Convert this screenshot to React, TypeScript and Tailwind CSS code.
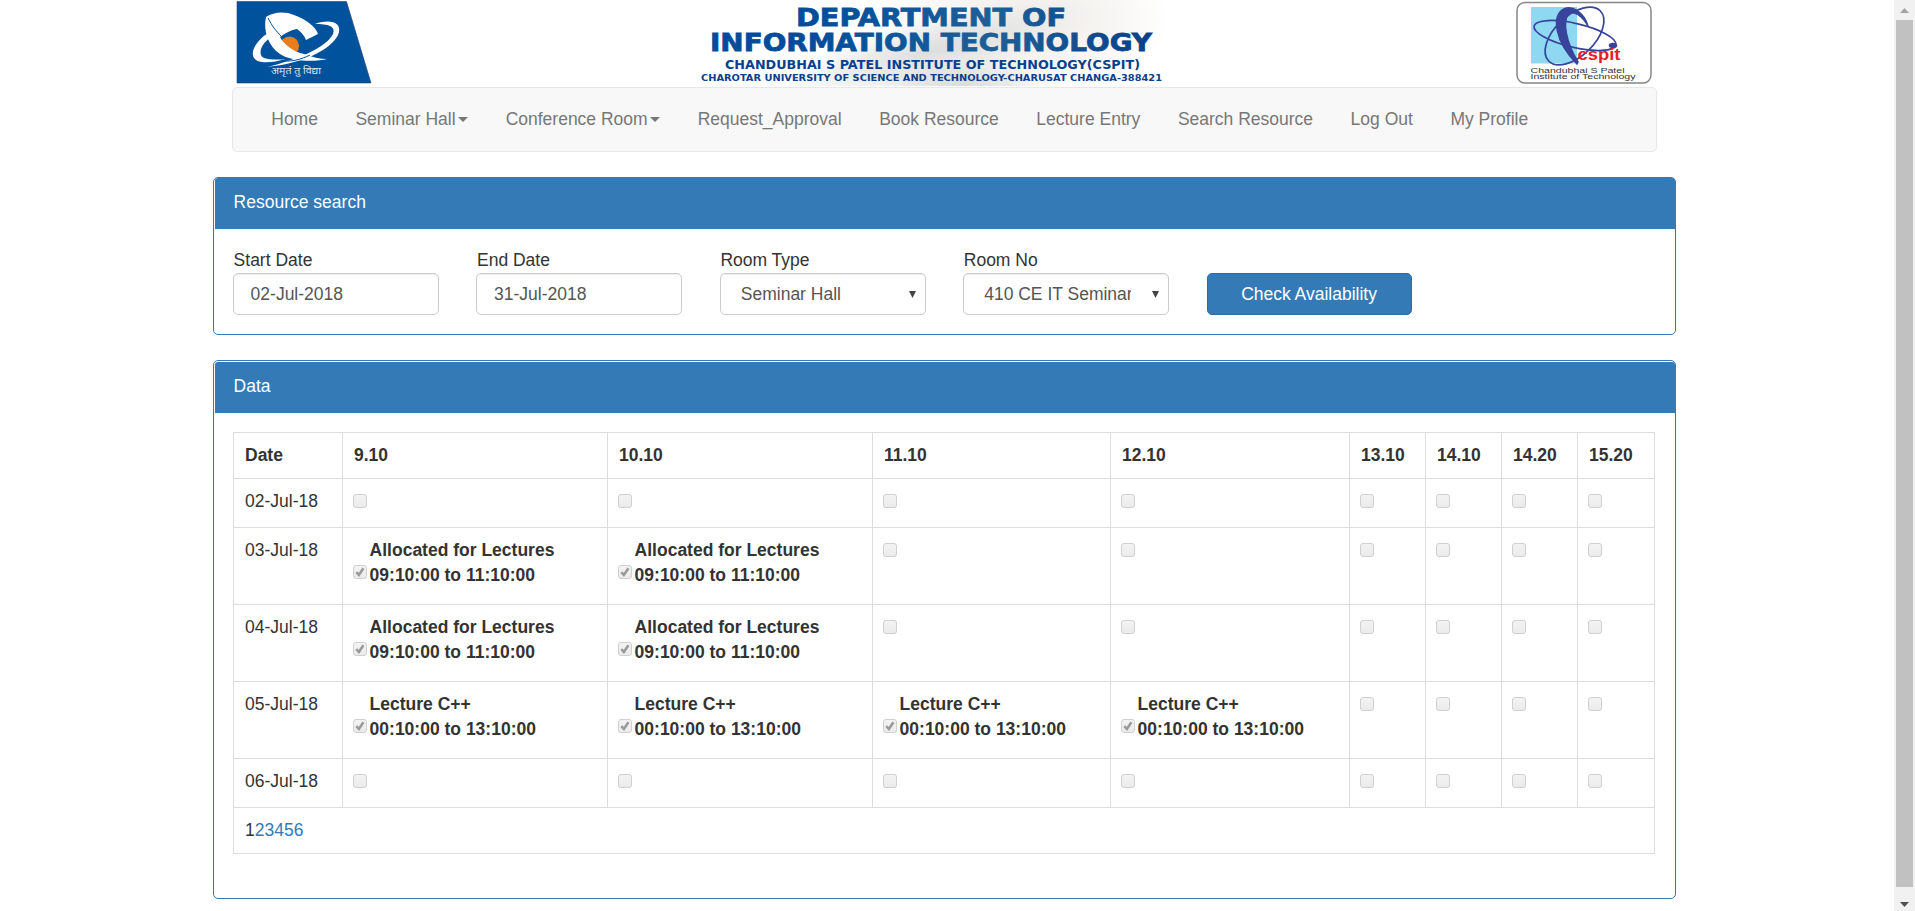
import React from "react";

const navItems = [
  { label: "Home" },
  { label: "Seminar Hall", caret: true },
  { label: "Conference Room", caret: true },
  { label: "Request_Approval" },
  { label: "Book Resource" },
  { label: "Lecture Entry" },
  { label: "Search Resource" },
  { label: "Log Out" },
  { label: "My Profile" },
];

const slots = ["9.10", "10.10", "11.10", "12.10", "13.10", "14.10", "14.20", "15.20"];

type Booking = { title: string; time: string; count: number };
const lectures: Booking = { title: "Allocated for Lectures", time: "09:10:00 to 11:10:00", count: 2 };
const cpp: Booking = { title: "Lecture C++", time: "00:10:00 to 13:10:00", count: 4 };

const rows: { date: string; booking?: Booking }[] = [
  { date: "02-Jul-18" },
  { date: "03-Jul-18", booking: lectures },
  { date: "04-Jul-18", booking: lectures },
  { date: "05-Jul-18", booking: cpp },
  { date: "06-Jul-18" },
];

function UniversityLogo() {
  return (
    <svg width="136" height="84" viewBox="0 0 136 84" className="block">
      <path d="M1 1.500H110.500L135 83H1Z" fill="#00529c" stroke="#27406f" strokeWidth="0.6" />
      <path
        d="M79 24C94 19 105 22 103 32C100 46 72 63 31 67C60 60 90 48 97 34C100 26 92 24 79 24Z"
        fill="#fff"
      />
      <path
        d="M32 33C20 41 14 52 18 58C22 64 36 63 50 59C38 60 27 60 25 55C23 49 28 42 34 38Z"
        fill="#fff"
      />
      <circle cx="53.500" cy="46" r="9.500" fill="#e87d1e" />
      <path
        d="M30 17C37 12 49 11 58 15C70 19 80 27 82 34L70 40C68 35 65 32 61 29C55 30 49 33 44 37C48 45 58 52 68 54C76 57 84 59 91 59C80 62 56 62 44 54C32 46 27 30 30 17Z"
        fill="#fff"
      />
      <path d="M32 18C36 26 40 31 45 36" fill="none" stroke="#00529c" strokeWidth="1" />
      <path d="M45 60C54 63 66 59 74 55" fill="none" stroke="#00529c" strokeWidth="1" />
      <text
        x="35"
        y="74"
        textLength="50"
        lengthAdjust="spacingAndGlyphs"
        fontSize="9"
        fill="#dbe6f2"
        fontFamily="Noto Sans, Noto Sans Devanagari, sans-serif"
      >
        अमृतं तु विद्या
      </text>
    </svg>
  );
}

function Banner() {
  const font = "DejaVu Sans, Liberation Sans, sans-serif";
  return (
    <svg width="480" height="86" viewBox="695 0 480 86" className="block">
      <defs>
        <radialGradient id="cream">
          <stop offset="0" stopColor="#f1eeea" />
          <stop offset="0.5" stopColor="#f6f4f1" />
          <stop offset="1" stopColor="#f6f4f1" stopOpacity="0" />
        </radialGradient>
        <radialGradient id="mist">
          <stop offset="0" stopColor="#cdd2d1" />
          <stop offset="0.5" stopColor="#dde0df" stopOpacity="0.8" />
          <stop offset="1" stopColor="#e5e7e6" stopOpacity="0" />
        </radialGradient>
        <linearGradient id="ink" x1="797" x2="1152" gradientUnits="userSpaceOnUse">
          <stop offset="0" stopColor="#004b9b" />
          <stop offset="0.55" stopColor="#1d5f98" />
          <stop offset="1" stopColor="#06408c" />
        </linearGradient>
      </defs>
      <ellipse cx="1030" cy="20" rx="140" ry="75" fill="url(#cream)" />
      <ellipse cx="930" cy="52" rx="170" ry="36" fill="url(#mist)" opacity="0.7" transform="rotate(-14 930 52)" />
      <ellipse cx="960" cy="86" rx="95" ry="34" fill="url(#mist)" opacity="0.8" />
      <g fontFamily={font} fontWeight="700" fill="url(#ink)">
        <text x="796" y="25.800" fontSize="25" textLength="270" lengthAdjust="spacingAndGlyphs" stroke="url(#ink)" strokeWidth="0.8">
          DEPARTMENT OF
        </text>
        <text x="710" y="51" fontSize="25" textLength="442" lengthAdjust="spacingAndGlyphs" stroke="url(#ink)" strokeWidth="0.8">
          INFORMATION TECHNOLOGY
        </text>
        <text x="725" y="68.500" fontSize="11.500" textLength="415" lengthAdjust="spacingAndGlyphs" fill="#08408d">
          CHANDUBHAI S PATEL INSTITUTE OF TECHNOLOGY(CSPIT)
        </text>
        <text x="701" y="80.500" fontSize="9.200" textLength="461" lengthAdjust="spacingAndGlyphs" fill="#08408d">
          CHAROTAR UNIVERSITY OF SCIENCE AND TECHNOLOGY-CHARUSAT CHANGA-388421
        </text>
      </g>
    </svg>
  );
}

function InstituteLogo() {
  return (
    <svg width="137" height="84" viewBox="0 0 137 84" className="block">
      <rect x="2" y="2.500" width="134" height="80.500" rx="8" fill="#fff" stroke="#858585" strokeWidth="1.500" />
      <rect x="16" y="7" width="46" height="56.500" fill="#8fd8f2" />
      <g fill="none" stroke="#38449b" strokeWidth="1.700">
        <ellipse cx="60" cy="35.500" rx="42" ry="12" transform="rotate(13 60 35.500)" />
        <ellipse cx="59.500" cy="36" rx="36" ry="20" transform="rotate(-44 59.500 36)" />
      </g>
      <path
        d="M73 26C69 12 57 5 49 9C36 16 40 42 62 64L63 62C51 42 47 21 54 14C59 10 67 16 73 26Z"
        fill="#38449b"
        stroke="#38449b"
        strokeWidth="1.500"
      />
      <ellipse cx="98" cy="45.500" rx="4.200" ry="2.800" fill="#38449b" />
      <text
        x="62.500"
        y="59.500"
        fontSize="17"
        fontWeight="700"
        textLength="43"
        lengthAdjust="spacingAndGlyphs"
        fill="#ed1c24"
        fontFamily="Liberation Sans, sans-serif"
      >
        cspit
      </text>
      <g fontFamily="Liberation Sans, sans-serif" fill="#333" fontSize="8">
        <text x="15.500" y="72.500" textLength="94" lengthAdjust="spacingAndGlyphs">
          Chandubhai S Patel
        </text>
        <text x="15.500" y="79.300" textLength="105" lengthAdjust="spacingAndGlyphs">
          Institute of Technology
        </text>
      </g>
    </svg>
  );
}

function Caret() {
  return (
    <svg width="10" height="5" viewBox="0 0 10 5" className="ml-[2.5px] block">
      <path d="M0 0H10L5 5Z" fill="#777" />
    </svg>
  );
}

function Checkbox({ checked = false }: { checked?: boolean }) {
  return (
    <span
      role="checkbox"
      aria-checked={checked}
      className="block h-[14px] w-[14px] shrink-0 rounded-[3px] border border-[#d0d0d0] bg-linear-to-b from-[#f3f3f3] to-[#ebebeb]"
    >
      {checked && (
        <svg width="12" height="12" viewBox="0 0 12 12" className="block">
          <path d="M2.300 6.200L4.900 9L9.400 2.200" fill="none" stroke="#999" strokeWidth="2.500" />
        </svg>
      )}
    </span>
  );
}

function Field({ label, value, select = false }: { label: string; value: string; select?: boolean }) {
  return (
    <div className="w-[206px]">
      <div className="h-[25px] pl-[0.6px] leading-[25px]">{label}</div>
      <div
        className={
          "flex h-[42px] items-center rounded-[5px] border border-[#ccc] bg-white text-[#555] shadow-[inset_0_1px_1px_rgba(0,0,0,0.075)] " +
          (select ? "pr-[9px] pl-[20px]" : "pl-[16.6px]")
        }
      >
        <span className="w-[147px] overflow-hidden whitespace-nowrap">{value}</span>
        {select && (
          <svg width="7" height="7" viewBox="0 0 7 7" className="ml-auto block">
            <path d="M0 0H7L3.500 7Z" fill="#444" />
          </svg>
        )}
      </div>
    </div>
  );
}

export default function App() {
  return (
    <div className="flex h-[911px] w-[1915px] overflow-hidden bg-white font-['Liberation_Sans',Arial,sans-serif] text-[17.5px] leading-[25px] text-[#333]">
      <div className="flex-1 pl-[213px]">
        <header className="flex h-[87px] w-[1463px] items-start pl-[23px]">
          <UniversityLogo />
          <div className="mr-[340px] ml-[323px]">
            <Banner />
          </div>
          <InstituteLogo />
        </header>

        <nav className="ml-[19px] flex h-[65px] w-[1425px] rounded-[5px] border border-[#e7e7e7] bg-[#f8f8f8] pt-[19px] pl-[19.5px] text-[#777]">
          {navItems.map((item) => (
            <a key={item.label} className="flex h-[25px] items-center px-[18.75px] whitespace-nowrap">
              {item.label}
              {item.caret && <Caret />}
            </a>
          ))}
        </nav>

        <section className="mt-[25px] h-[158px] w-[1463px] rounded-[5px] border border-[#337ab7] pl-px">
          <h2 className="h-[51px] rounded-t-[3px] bg-[#337ab7] pt-[12px] pl-[18.6px] text-white">Resource search</h2>
          <div className="flex gap-[37.4px] pt-[19px] pl-[18px]">
            <Field label="Start Date" value="02-Jul-2018" />
            <Field label="End Date" value="31-Jul-2018" />
            <Field label="Room Type" value="Seminar Hall" select />
            <Field label="Room No" value="410 CE IT Seminar Hall" select />
            <button className="mt-[25px] h-[42px] w-[205px] rounded-[5px] border border-[#2e6da4] bg-[#337ab7] text-white">
              Check Availability
            </button>
          </div>
        </section>

        <section className="mt-[25px] h-[539px] w-[1463px] rounded-[5px] border border-[#337ab7] pt-px pl-px">
          <h2 className="h-[51px] rounded-t-[3px] bg-[#337ab7] pt-[12px] pl-[18.6px] text-white">Data</h2>
          <table className="mt-[19px] ml-[18px] w-[1422px] table-fixed border-collapse [&_td]:border [&_td]:border-[#ddd] [&_td]:pt-[10px] [&_td]:pr-[10px] [&_td]:pb-0 [&_td]:pl-[11px] [&_td]:align-top [&_th]:border [&_th]:border-[#ddd] [&_th]:pt-[10px] [&_th]:pr-[10px] [&_th]:pb-0 [&_th]:pl-[11px] [&_th]:text-left [&_th]:align-top">
            <colgroup>
              <col className="w-[109px]" />
              <col className="w-[265px]" />
              <col className="w-[265px]" />
              <col className="w-[238px]" />
              <col className="w-[239px]" />
              <col className="w-[76px]" />
              <col className="w-[76px]" />
              <col className="w-[76px]" />
              <col className="w-[77px]" />
            </colgroup>
            <thead>
              <tr className="h-[46px]">
                <th>Date</th>
                {slots.map((slot) => (
                  <th key={slot}>{slot}</th>
                ))}
              </tr>
            </thead>
            <tbody>
              {rows.map((row) => (
                <tr key={row.date} className={row.booking ? "h-[77px]" : "h-[49px]"}>
                  <td className="whitespace-nowrap">{row.date}</td>
                  {slots.map((slot, i) => (
                    <td key={slot}>
                      {row.booking && i < row.booking.count ? (
                        <div className="-ml-px flex gap-[2.6px] font-bold whitespace-nowrap">
                          <div className="pt-[27px]">
                            <Checkbox checked />
                          </div>
                          <div>
                            {row.booking.title}
                            <br />
                            {row.booking.time}
                          </div>
                        </div>
                      ) : (
                        <div className="-ml-px pt-[5px]">
                          <Checkbox />
                        </div>
                      )}
                    </td>
                  ))}
                </tr>
              ))}
              <tr className="h-[46px]">
                <td colSpan={9}>
                  <span>1</span>
                  <span className="text-[#337ab7]">23456</span>
                </td>
              </tr>
            </tbody>
          </table>
        </section>
      </div>

      <div className="flex h-[911px] w-[21px] flex-col items-center bg-[#f1f1f1]">
        <svg width="21" height="20" viewBox="0 0 21 20" className="block">
          <path d="M6 13L10.500 8L15 13Z" fill="#a3a3a3" />
        </svg>
        <div className="h-[867px] w-[17px] bg-[#c1c1c1]" />
        <svg width="21" height="24" viewBox="0 0 21 24" className="block">
          <path d="M6 15L10.500 20L15 15Z" fill="#505050" />
        </svg>
      </div>
    </div>
  );
}
